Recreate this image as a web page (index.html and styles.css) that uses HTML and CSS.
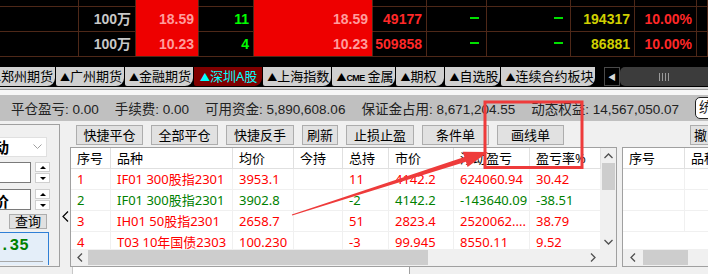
FILE: index.html
```html
<!DOCTYPE html>
<html lang="zh-CN">
<head>
    <meta charset="UTF-8">
    <meta name="viewport" content="width=device-width, initial-scale=1.0">
    <title>交易终端</title>
    <link rel="stylesheet" href="styles.css">
</head>
<body>
    <div class="quotes">
        <div class="qrow qrow-top">
            <div class="qc"></div><div class="qc"></div><div class="qc hot"></div><div class="qc"></div><div class="qc hot"></div><div class="qc"></div><div class="qc"></div><div class="qc"></div><div class="qc"></div><div class="qc"></div><div class="qc"></div>
        </div>
        <div class="qrow">
            <div class="qc"></div>
            <div class="qc gray">100万</div>
            <div class="qc hot">18.59</div>
            <div class="qc lime">11</div>
            <div class="qc hot">18.59</div>
            <div class="qc up">49177</div>
            <div class="qc dash-cell"><span class="dash"></span></div>
            <div class="qc dash-cell"><span class="dash"></span></div>
            <div class="qc vol">194317</div>
            <div class="qc up">10.00%</div>
            <div class="qc"></div>
        </div>
        <div class="qrow qrow-last">
            <div class="qc"></div>
            <div class="qc gray">100万</div>
            <div class="qc hot">10.23</div>
            <div class="qc lime">4</div>
            <div class="qc hot">10.23</div>
            <div class="qc up">509858</div>
            <div class="qc dash-cell"><span class="dash"></span></div>
            <div class="qc dash-cell"><span class="dash"></span></div>
            <div class="qc vol">86881</div>
            <div class="qc up">10.00%</div>
            <div class="qc"></div>
        </div>
    </div>

    <div class="tabbar">
        <div class="tabs">
            <div class="tab"><span class="tri">▲</span>郑州期货</div>
            <div class="tab"><span class="tri">▲</span>广州期货</div>
            <div class="tab"><span class="tri">▲</span>金融期货</div>
            <div class="tab on"><span class="tri">▲</span>深圳A股</div>
            <div class="tab"><span class="tri">▲</span>上海指数</div>
            <div class="tab"><span class="tri">▲</span><span class="cme">CME</span>金属</div>
            <div class="tab"><span class="tri">▲</span>期权</div>
            <div class="tab"><span class="tri">▲</span>自选股</div>
            <div class="tab"><span class="tri">▲</span>连续合约板块</div>
        </div>
        <div class="tab-prev">◀</div>
        <div class="tab-scroll"><span class="grip"></span></div>
    </div>
    <div class="rule"></div>
    <div class="rule-gap"></div>

    <div class="status">
        <span>平仓盈亏: 0.00</span>
        <span>手续费: 0.00</span>
        <span>可用资金: 5,890,608.06</span>
        <span>保证金占用: 8,671,204.55</span>
        <span>动态权益: 14,567,050.07</span>
        <span class="status-btn">统</span>
    </div>

    <div class="main">
        <div class="left">
            <div class="combo">
                <span class="combo-text">动</span>
                <svg width="9" height="6" viewBox="0 0 9 6"><path d="M0.5 0.5 L4.5 4.5 L8.5 0.5" fill="none" stroke="#a0a0a0" stroke-width="1"/></svg>
            </div>
            <div class="spin-row">
                <div class="field"></div>
                <div class="spin"><span><i class="tri-up"></i></span><span><i class="tri-down"></i></span></div>
            </div>
            <div class="spin-row spin-row-2">
                <div class="field"><span class="field-text">价</span></div>
                <div class="spin"><span><i class="tri-up"></i></span><span><i class="tri-down"></i></span></div>
            </div>
            <div class="query">查询</div>
            <div class="price-box">
                <div class="price">.35</div>
                <div class="price-line"></div>
            </div>
        </div>

        <div class="collapse">
            <svg width="7" height="11" viewBox="0 0 7 11"><path d="M6 0.5 L1 5.5 L6 10.5" fill="none" stroke="#000" stroke-width="1.2"/></svg>
        </div>

        <div class="center">
            <div class="toolbar">
                <div class="btn">快捷平仓</div>
                <div class="btn">全部平仓</div>
                <div class="btn btn-68">快捷反手</div>
                <div class="btn btn-short">刷新</div>
                <div class="btn btn-68">止损止盈</div>
                <div class="btn">条件单</div>
                <div class="btn">画线单</div>
                <div class="btn btn-cut">撤</div>
            </div>

            <div class="panes">
                <div class="grid">
                    <div class="tbl">
                        <div class="trow thead">
                            <div>序号</div><div>品种</div><div>均价</div><div>今持</div><div>总持</div><div>市价</div><div>浮动盈亏</div><div>盈亏率%</div>
                        </div>
                        <div class="trow rise">
                            <div>1</div><div>IF01 300股指2301</div><div>3953.1</div><div></div><div>11</div><div>4142.2</div><div>624060.94</div><div>30.42</div>
                        </div>
                        <div class="trow fall">
                            <div>2</div><div>IF01 300股指2301</div><div>3902.8</div><div></div><div>-2</div><div>4142.2</div><div>-143640.09</div><div>-38.51</div>
                        </div>
                        <div class="trow rise">
                            <div>3</div><div>IH01 50股指2301</div><div>2658.7</div><div></div><div>51</div><div>2823.4</div><div>2520062....</div><div>38.79</div>
                        </div>
                        <div class="trow rise">
                            <div>4</div><div>T03 10年国债2303</div><div>100.230</div><div></div><div>-3</div><div>99.945</div><div>8550.11</div><div>9.52</div>
                        </div>
                    </div>
                    <div class="vscroll">
                        <div class="arrow"><svg width="9" height="6" viewBox="0 0 9 6"><path d="M0.5 5 L4.5 1 L8.5 5" fill="none" stroke="#505050" stroke-width="1.3"/></svg></div>
                        <div class="vthumb"></div>
                        <div class="arrow arrow-end"><svg width="9" height="6" viewBox="0 0 9 6"><path d="M0.5 1 L4.5 5 L8.5 1" fill="none" stroke="#505050" stroke-width="1.3"/></svg></div>
                    </div>
                    <div class="hscroll">
                        <div class="harrow"><svg width="6" height="9" viewBox="0 0 6 9"><path d="M5 0.5 L1 4.5 L5 8.5" fill="none" stroke="#505050" stroke-width="1.3"/></svg></div>
                        <div class="hthumb"></div>
                        <div class="harrow harrow-end"><svg width="6" height="9" viewBox="0 0 6 9"><path d="M1 0.5 L5 4.5 L1 8.5" fill="none" stroke="#505050" stroke-width="1.3"/></svg></div>
                    </div>
                    <div class="corner"></div>
                </div>

                <div class="side">
                    <div class="trow thead side-row"><div>序号</div><div>品种</div></div>
                    <div class="trow side-row"><div></div><div></div></div>
                    <div class="trow side-row"><div></div><div></div></div>
                    <div class="trow side-row"><div></div><div></div></div>
                    <div class="hscroll side-scroll">
                        <div class="harrow"><svg width="6" height="9" viewBox="0 0 6 9"><path d="M5 0.5 L1 4.5 L5 8.5" fill="none" stroke="#505050" stroke-width="1.3"/></svg></div>
                        <div class="hthumb side-thumb"></div>
                    </div>
                </div>
            </div>

            <div class="under">
                <div class="under-box"></div>
            </div>
        </div>
    </div>

    <svg class="mark" width="708" height="274" viewBox="0 0 708 274">
        <rect x="485" y="102" width="97" height="65.5" fill="none" stroke="#ee3b3b" stroke-width="3"/>
        <polygon points="291.85,214.52 464.4,157.0 462.7,151.7 488,152 467.6,167.0 465.9,161.7 292.15,215.48" fill="#ee3b3b"/>
    </svg>
</body>
</html>
```

FILE: styles.css
```css
* {
    box-sizing: border-box;
}
body {
    position: relative;
    margin: 0;
    width: 708px;
    height: 274px;
    overflow: hidden;
    background: #f0f0f0;
    font-family: "Noto Sans", "Noto Sans CJK SC", sans-serif;
    color: #000;
}

/* quote board */
.quotes {
    background: #000;
    height: 66px;
}
.qrow {
    display: grid;
    grid-template-columns: 79px 57px 63px 55px 119px 54px 60px 84px 64px 62px 11px;
    height: 25px;
}
.qrow-top {
    height: 7px;
}
.qc {
    border-right: 1px solid #4e2818;
    border-bottom: 1px solid #4e2818;
    padding-right: 4px;
    text-align: right;
    font: bold 14px/24px "Liberation Sans", "Noto Sans CJK SC", sans-serif;
    white-space: nowrap;
}
.qc.hot {
    background: #ee0000;
    color: #ff9c9c;
    border-bottom-color: #ee0000;
}
.qrow-last .qc.hot {
    border-bottom-color: #4e2818;
}
.qc.gray {
    color: #c8c8c8;
}
.qc.up {
    color: #ff2828;
}
.qc.vol {
    color: #d0d000;
}
.qc.lime {
    color: #00ff00;
}
.qc.dash-cell {
    padding-right: 7px;
}
.dash {
    display: inline-block;
    width: 9px;
    height: 2px;
    background: #00e000;
    vertical-align: middle;
    margin-bottom: 5px;
}

/* market tabs */
.tabbar {
    display: flex;
    height: 21px;
    background: #000;
}
.tabs {
    display: flex;
    flex: 1;
    overflow: hidden;
    padding-top: 1px;
}
.tab {
    flex-shrink: 0;
    min-width: 48px;
    height: 19px;
    padding: 0 2px 0 4px;
    margin-right: 1px;
    background: #d0d0d0;
    border-radius: 0 0 8px 2px;
    font-size: 13px;
    line-height: 19px;
    white-space: nowrap;
}
.tab:first-child {
    margin-left: -13px;
}
.tab.on {
    padding: 0 5px 0 6px;
    background: #800000;
    color: #00ffff;
}
.tri {
    display: inline-block;
    width: 10px;
    font-size: 10px;
}
.cme {
    display: inline-block;
    width: 21px;
    font: bold 9px "Liberation Sans Narrow", "Liberation Sans", sans-serif;
    letter-spacing: -0.5px;
}
.tab-prev {
    width: 16px;
    height: 19px;
    margin-top: 1px;
    border: 1px solid #4a4a4a;
    color: #d8d8d8;
    font-size: 8px;
    line-height: 17px;
    text-align: center;
}
.tab-scroll {
    display: flex;
    align-items: center;
    justify-content: center;
    width: 88px;
    height: 19px;
    margin-top: 1px;
    background: #3c3c3c;
    border-radius: 5px 0 0 5px;
}
.grip {
    width: 10px;
    height: 8px;
    background: repeating-linear-gradient(90deg, #9a9a9a 0 1px, transparent 1px 3px);
}
.rule {
    height: 3px;
    border-top: 2px solid #d8d8d8;
    border-bottom: 1px solid #a0a0a0;
}
.rule-gap {
    height: 5px;
    background: #f6f6f6;
}

/* account status */
.status {
    display: flex;
    align-items: center;
    gap: 16px;
    height: 26px;
    padding-left: 11px;
    background: #c0c0c0;
    font-family: "Liberation Sans", "Noto Sans CJK SC", sans-serif;
    font-size: 13.5px;
    color: #222;
    white-space: nowrap;
}
.status-btn {
    margin-left: auto;
    margin-right: -9px;
    width: 24px;
    height: 22px;
    padding-left: 3px;
    background: #fff;
    border: 1px solid #222;
    border-radius: 5px;
    line-height: 20px;
}

/* body area */
.main {
    display: flex;
    height: 153px;
}
.left {
    flex-shrink: 0;
    width: 60px;
    height: 143px;
    margin-top: 3px;
    padding-top: 12px;
    border-top: 1px solid #a0a0a0;
    border-right: 1px solid #a0a0a0;
    border-bottom: 1px solid #a0a0a0;
}
.combo {
    display: flex;
    align-items: center;
    justify-content: space-between;
    width: 47px;
    height: 20px;
    padding-right: 4px;
    background: #fff;
    border: 1px solid #e0e0e0;
    border-left: none;
}
.combo-text, .field-text {
    margin-left: -6px;
    font-size: 15px;
    font-weight: bold;
    line-height: 18px;
}
.spin-row {
    display: flex;
    gap: 4px;
    height: 21px;
    margin-top: 5px;
}
.spin-row-2 {
    margin-top: 6px;
}
.field {
    width: 31px;
    height: 21px;
    background: #fff;
    border: 1px solid #7a7a7a;
    border-left: none;
    overflow: hidden;
}
.spin {
    display: flex;
    flex-direction: column;
    gap: 1px;
    width: 15px;
}
.spin span {
    display: flex;
    align-items: center;
    justify-content: center;
    flex: 1;
    background: #fff;
    border: 1px solid #cfcfcf;
}
.tri-up {
    border-left: 3px solid transparent;
    border-right: 3px solid transparent;
    border-bottom: 3px solid #000;
}
.tri-down {
    border-left: 3px solid transparent;
    border-right: 3px solid transparent;
    border-top: 3px solid #000;
}
.query {
    width: 38px;
    height: 15px;
    margin: 4px 0 0 9px;
    background: #e1e1e1;
    border: 1px solid #adadad;
    font-size: 13px;
    line-height: 12px;
    text-align: center;
}
.price-box {
    width: 49px;
    height: 33px;
    margin-top: 3px;
    padding-top: 3px;
    background: #e4eef9;
    border: 1px solid #2f7fd6;
    border-left: none;
    border-bottom: none;
}
.price {
    color: #008000;
    font: bold 16px/20px "Liberation Mono", monospace;
}
.price-line {
    width: 43px;
    height: 1px;
    margin-top: 5px;
    background: #a8a8a8;
}
.collapse {
    flex-shrink: 0;
    width: 10px;
    padding: 84px 0 0 2px;
}

.center {
    flex-shrink: 0;
    width: 638px;
}
.toolbar {
    display: flex;
    gap: 8px;
    height: 20px;
    margin-top: 4px;
    padding-left: 6px;
}
.btn {
    flex-shrink: 0;
    width: 67px;
    height: 20px;
    background: #e1e1e1;
    border: 1px solid #adadad;
    font-size: 13px;
    line-height: 18px;
    text-align: center;
    white-space: nowrap;
}
.btn-68 {
    width: 68px;
}
.btn-short {
    width: 36px;
}
.btn-cut {
    width: 26px;
    margin-left: auto;
    margin-right: -8px;
    text-align: left;
    padding-left: 3px;
}

/* positions grid */
.panes {
    display: flex;
    margin-top: 2px;
}
.grid {
    flex-shrink: 0;
    display: grid;
    grid-template-columns: 530px 15px;
    grid-template-rows: 101px 17px;
    width: 547px;
    height: 120px;
    background: #fff;
    border: 1px solid #a0a0a0;
}
.tbl {
    overflow: hidden;
}
.trow {
    display: grid;
    grid-template-columns: 40px 122px 61px 49px 46px 65px 76px 71px;
    height: 21px;
}
.trow > div {
    padding-left: 6px;
    border-right: 1px solid #f0f0f0;
    border-bottom: 1px solid #f0f0f0;
    font-size: 13px;
    line-height: 20px;
    white-space: nowrap;
    overflow: hidden;
}
.thead > div {
    border-right-color: #e0e0e0;
    border-bottom-color: #e0e0e0;
}
.rise {
    color: #f00;
}
.fall {
    color: #008000;
}
.vscroll {
    display: flex;
    flex-direction: column;
    background: #f0f0f0;
}
.arrow {
    display: flex;
    align-items: center;
    justify-content: center;
    height: 15px;
}
.arrow-end {
    margin-top: auto;
}
.vthumb {
    height: 27px;
    margin: 0 1px;
    background: #cdcdcd;
}
.hscroll {
    display: flex;
    align-items: center;
    background: #f0f0f0;
}
.harrow {
    display: flex;
    align-items: center;
    justify-content: center;
    width: 17px;
    height: 17px;
}
.harrow-end {
    margin-left: auto;
}
.hthumb {
    width: 340px;
    height: 15px;
    background: #cdcdcd;
}
.corner {
    background: #f0f0f0;
}

.side {
    flex-shrink: 0;
    display: flex;
    flex-direction: column;
    width: 100px;
    height: 120px;
    margin-left: 5px;
    background: #fff;
    border: 1px solid #a0a0a0;
}
.side-row {
    grid-template-columns: 62px 60px;
}
.side-scroll {
    margin-top: auto;
    height: 17px;
}
.side-scroll .harrow {
    width: 20px;
}
.side-thumb {
    width: 45px;
}

.under {
    display: flex;
    height: 7px;
}
.under-box {
    width: 338px;
    margin-left: 2px;
    background: #fff;
    border-left: 1px solid #c8c8c8;
    border-right: 1px solid #a0a0a0;
}

/* red annotation on top of the screenshot */
.mark {
    position: absolute;
    left: 0;
    top: 0;
    pointer-events: none;
}
```
